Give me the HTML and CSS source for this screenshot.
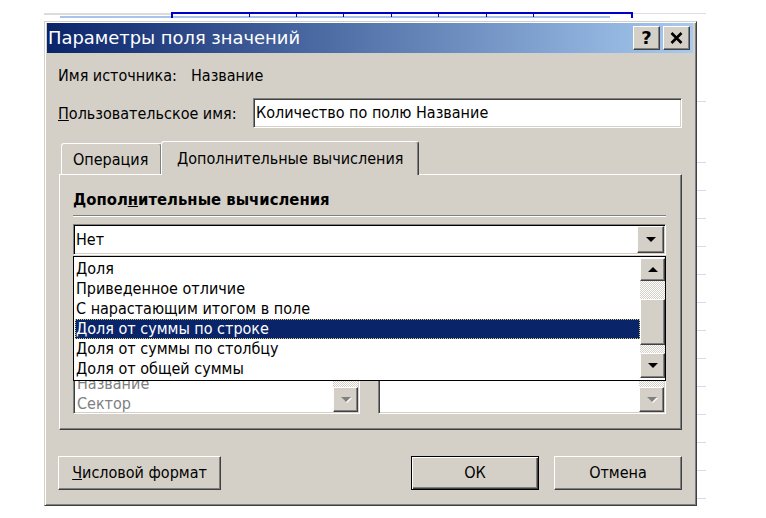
FILE: index.html
```html
<!DOCTYPE html>
<html lang="ru">
<head>
<meta charset="utf-8">
<title>Параметры поля значений</title>
<link rel="stylesheet" href="styles.css">
</head>
<body>
<div class="sheet" aria-hidden="true">
  <div class="sheet-gray"></div>
  <div class="sheet-lightblue"></div>
  <div class="sheet-cols"><i></i><i></i><i></i><i></i><i></i><i></i><i></i><i></i></div>
  <div class="sheet-gray2"></div>
  <div class="sheet-grid1"></div>
  <div class="sheet-grid"></div>
</div>

<div class="dialog">
  <div class="titlebar">
    <span class="title">Параметры поля значений</span>
    <div class="tbtns">
      <button class="tbtn help">?</button>
      <button class="tbtn close"><svg width="13" height="12" viewBox="0 0 13 12"><path d="M1.5 1 L11.5 11 M11.5 1 L1.5 11" stroke="#000" stroke-width="2.6" fill="none"/></svg></button>
    </div>
  </div>

  <div class="content">
    <div class="info">
      <span class="info-lbl">Имя источника:</span>
      <span>Название</span>
    </div>

    <div class="name">
      <label class="name-lbl"><u>П</u>ользовательское имя:</label>
      <div class="field">Количество по полю Название</div>
    </div>

    <div class="tabs">
      <div class="tab">Операция</div>
      <div class="tab active">Дополнительные вычисления</div>
    </div>

    <div class="panel">
      <div class="group">Допол<u>н</u>ительные вычисления</div>
      <div class="etch"></div>
      <div class="combo">
        <span class="combo-text">Нет</span>
        <span class="sbtn dd"><i class="tri down"></i></span>
      </div>

      <div class="boxes">
        <div class="lbox left">
          <div class="items">
            <div>Название</div>
            <div>Сектор</div>
          </div>
          <div class="vscroll">
            <span class="track"></span>
            <span class="sbtn down-btn"><i class="tri down dis"></i></span>
          </div>
        </div>
        <div class="lbox right">
          <div class="items"></div>
          <div class="vscroll">
            <span class="track"></span>
            <span class="sbtn down-btn"><i class="tri down dis"></i></span>
          </div>
        </div>
      </div>

      <div class="dropdown">
        <ul class="opts">
          <li>Доля</li>
          <li>Приведенное отличие</li>
          <li>С нарастающим итогом в поле</li>
          <li class="sel">Доля от суммы по строке</li>
          <li>Доля от суммы по столбцу</li>
          <li>Доля от общей суммы</li>
        </ul>
        <div class="dscroll">
          <span class="sbtn up-btn"><i class="tri up"></i></span>
          <span class="track t1"></span>
          <span class="sbtn thumb"></span>
          <span class="track t2"></span>
          <span class="sbtn dn-btn"><i class="tri down"></i></span>
        </div>
      </div>
    </div>

    <div class="actions">
      <button class="btn wide"><u>Ч</u>исловой формат</button>
      <span class="spacer"></span>
      <button class="btn default">ОК</button>
      <button class="btn">Отмена</button>
    </div>
  </div>
</div>
</body>
</html>
```

FILE: styles.css
```css
* { box-sizing: border-box; }

html, body { margin: 0; }

body {
  width: 766px;
  height: 518px;
  overflow: hidden;
  background: #fff;
  position: relative;
  padding: 21px 0 0 44px;
  font-family: "DejaVu Sans Condensed", "DejaVu Sans", sans-serif;
  font-stretch: semi-condensed;
  font-size: 16px;
  color: #000;
}

/* ---------- spreadsheet fragments behind the dialog ---------- */
.sheet-gray {
  position: absolute; left: 44px; top: 13px; width: 128px; height: 2px;
  background: #dcdcdc;
}
.sheet-lightblue {
  position: absolute; left: 60px; top: 16px; width: 550px; height: 2px;
  background: #a9c3ea;
}
.sheet-cols {
  position: absolute; left: 171px; top: 12px; height: 6px;
  display: grid;
  grid-template-columns: 78px 47px 47px 48px 47px 48px 47px 98px;
  border-top: 2px solid #0000c8;
  border-right: 2px solid #0000c8;
}
.sheet-cols i { border-left: 1px solid #0000c8; height: 3px; }
.sheet-cols i:first-child { border-left-width: 2px; height: 4px; }
.sheet-gray2 {
  position: absolute; left: 633px; top: 13px; width: 73px; height: 1px;
  background: #dcdcf0;
}
.sheet-grid1 {
  position: absolute; left: 697px; top: 101px; width: 9px; height: 1px;
  background: #d8d8f0;
}
.sheet-grid {
  position: absolute; left: 697px; top: 162px; width: 9px; height: 337px;
  background: repeating-linear-gradient(to bottom, #d8d8f0 0 1px, transparent 1px 28px);
}

/* ---------- dialog window ---------- */
.dialog {
  position: relative;
  width: 653px;
  height: 485px;
  background: #d4d0c8;
  border: 1px solid;
  border-color: #d4d0c8 #404040 #404040 #d4d0c8;
  box-shadow: inset 1px 1px #fff, inset -1px -1px #808080;
  padding: 1px 3px 0 2px;
  display: flex;
  flex-direction: column;
}

.titlebar {
  flex: none;
  height: 30px;
  background: linear-gradient(to right, #0a246a, #a6caf0);
  display: flex;
  align-items: center;
  justify-content: space-between;
  padding: 0 3px 0 1px;
}
.title {
  color: #fff;
  font-family: "DejaVu Sans", sans-serif;
  font-stretch: normal;
  font-size: 17.9px;
  line-height: 30px;
  white-space: nowrap;
}
.tbtns { display: flex; gap: 3px; }

.tbtn, .sbtn, .btn {
  background: #d4d0c8;
  border: 1px solid;
  border-color: #fff #404040 #404040 #fff;
  box-shadow: inset -1px -1px #808080;
  padding: 0;
  font: inherit;
  color: #000;
}
.tbtn {
  width: 27px;
  height: 24px;
  display: flex;
  align-items: center;
  justify-content: center;
}
.tbtn.help {
  font-family: "DejaVu Sans", sans-serif;
  font-stretch: normal;
  font-weight: bold;
  font-size: 18px;
  line-height: 20px;
}

/* ---------- content ---------- */
.content {
  flex: 1;
  display: flex;
  flex-direction: column;
  padding: 0 11px 0 11px;
}

.info {
  margin-top: 13px;
  height: 20px;
  line-height: 20px;
  display: flex;
}
.info-lbl { width: 133px; }

.name {
  margin-top: 12px;
  height: 30px;
  display: flex;
  align-items: center;
}
.name-lbl { width: 195px; white-space: nowrap; }

.field {
  flex: 1;
  height: 30px;
  background: #fff;
  border: 1px solid;
  border-color: #808080 #fff #fff #808080;
  box-shadow: inset 1px 1px #404040, inset -1px -1px #d4d0c8;
  padding-left: 2px;
  line-height: 28px;
  white-space: nowrap;
}

/* ---------- tabs ---------- */
.tabs {
  margin-top: 13px;
  margin-left: 1px;
  height: 33px;
  display: flex;
  align-items: flex-end;
  position: relative;
  z-index: 1;
}
.tab {
  height: 31px;
  width: 101px;
  margin-left: 2px;
  background: #d4d0c8;
  border: 1px solid;
  border-bottom: none;
  border-color: #fff #404040 transparent #fff;
  box-shadow: inset -1px 0 #808080;
  border-radius: 3px 3px 0 0;
  padding: 6px 0 0 11px;
  line-height: 20px;
  white-space: nowrap;
}
.tab.active {
  height: 34px;
  width: 258px;
  margin-left: -1px;
  margin-bottom: -1px;
  padding: 7px 0 0 15px;
  position: relative;
}

.panel {
  position: relative;
  width: 623px;
  height: 256px;
  margin-left: 1px;
  border: 1px solid;
  border-color: #fff #404040 #404040 #fff;
  box-shadow: inset -1px -1px #808080;
  padding: 0 15px 0 13px;
}

.group {
  margin-top: 15px;
  height: 20px;
  line-height: 20px;
  font-weight: bold;
  font-size: 16.5px;
  white-space: nowrap;
}
.etch {
  margin-top: 5px;
  border-top: 1px solid #808080;
  border-bottom: 1px solid #fff;
}

.combo {
  margin-top: 7px;
  height: 31px;
  background: #fff;
  border: 1px solid;
  border-color: #808080 #fff #fff #808080;
  box-shadow: inset 1px 1px #000, inset -1px -1px #d4d0c8;
  padding: 1px 1px 1px 2px;
  display: flex;
  align-items: stretch;
}
.combo-text { flex: 1; line-height: 28px; }
.dd {
  width: 27px;
  display: flex;
  align-items: center;
  justify-content: center;
}

.tri {
  width: 0;
  height: 0;
  border-left: 5px solid transparent;
  border-right: 5px solid transparent;
}
.tri.down { border-top: 5px solid #000; }
.tri.up { border-bottom: 5px solid #000; }
.tri.dis {
  border-top-color: #808080;
  filter: drop-shadow(1px 1px 0 #fff);
}

/* ---------- list boxes under the drop-down ---------- */
.boxes {
  margin-top: 7px;
  display: flex;
  gap: 18px;
  height: 152px;
}
.lbox {
  background: #fff;
  border: 1px solid;
  border-color: #808080 #fff #fff #808080;
  box-shadow: inset 1px 1px #404040, inset -1px -1px #d4d0c8;
  padding: 1px 1px 1px 2px;
  display: flex;
}
.lbox.left { width: 287px; }
.lbox.right { flex: 1; }
.items {
  flex: 1;
  display: flex;
  flex-direction: column;
  justify-content: flex-end;
  color: #808080;
  line-height: 20px;
  padding-left: 1px;
  margin-bottom: -2px;
}
.vscroll {
  width: 25px;
  display: flex;
  flex-direction: column;
  justify-content: flex-end;
}
.track {
  background: repeating-conic-gradient(#fff 0 25%, #d4d0c8 0 50%) 0 0 / 2px 2px;
}
.vscroll .track { height: 8px; }
.sbtn {
  display: flex;
  align-items: center;
  justify-content: center;
}
.down-btn { height: 25px; }

/* ---------- open drop-down list ---------- */
.dropdown {
  position: absolute;
  left: 13px;
  top: 81px;
  width: 593px;
  height: 125px;
  background: #fff;
  border: 1px solid #000;
  display: flex;
  z-index: 3;
}
.opts {
  flex: 1;
  list-style: none;
  margin: 0;
  padding: 2px 0 0 1px;
}
.opts li {
  height: 20px;
  line-height: 20px;
  padding-left: 1px;
  white-space: nowrap;
}
.opts li.sel {
  background: #0a246a;
  color: #fff;
  outline: 1px dotted #d8d070;
  outline-offset: -1px;
}
.dscroll {
  width: 25px;
  padding: 1px 0 2px;
  display: flex;
  flex-direction: column;
}
.up-btn { height: 23px; }
.track.t1 { height: 18px; }
.thumb { height: 46px; }
.track.t2 { height: 8px; }
.dn-btn { height: 25px; }

/* ---------- bottom buttons ---------- */
.actions {
  margin-top: 26px;
  display: flex;
  gap: 15px;
}
.spacer { flex: 1; }
.btn {
  height: 34px;
  width: 128px;
  text-align: center;
  line-height: 30px;
}
.btn.wide { width: 163px; }
.btn.default {
  border: 1px solid #000;
  box-shadow: inset 1px 1px #fff, inset -1px -1px #404040, inset -2px -2px #808080;
}
```
